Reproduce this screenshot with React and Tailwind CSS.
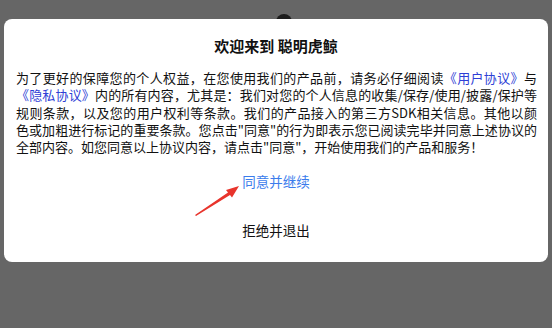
import React from 'react'

function PointerArrow() {
  return (
    <svg className="absolute left-[186px] top-[162px]" width="56" height="40" viewBox="0 0 56 40">
      <polygon points="5,34 38,11.5 36,9 49,5 42,16.5 40,14 6,35" fill="#e8342c" />
    </svg>
  )
}

const lines = [
  <>为了更好的保障您的个人权益，在您使用我们的产品前，请务必仔细阅读<span className="text-[#2f3fd6]">《用户协议》</span>与</>,
  <><span className="text-[#2f3fd6]">《隐私协议》</span>内的所有内容，尤其是：我们对您的个人信息的收集/保存/使用/披露/保护等</>,
  <>规则条款，以及您的用户权利等条款。我们的产品接入的第三方SDK相关信息。其他以颜</>,
  <>色或加粗进行标记的重要条款。您点击"同意"的行为即表示您已阅读完毕并同意上述协议的</>,
]

export default function App() {
  return (
    <div
      className="relative w-[552px] h-[328px] overflow-hidden bg-[#666666] pt-[19px] px-[4px]"
      style={{ fontFamily: '"Noto Sans CJK SC", "Noto Sans", sans-serif' }}
    >
      <div className="absolute left-[276px] top-[14px] size-[16px] rounded-full bg-[#1c1c1c]" />
      <div className="relative h-[243px] rounded-[8px] bg-white flex flex-col">
        <h1 className="pt-[16px] text-center text-[15px] leading-[22px] font-bold text-[#111]">
          欢迎来到 聪明虎鲸
        </h1>
        <div className="mt-[12px] pl-[12px] pr-[11px] text-[13px] leading-[17.3px] text-[#111]">
          {lines.map((l, i) => (
            <div key={i} className="text-justify [text-align-last:justify] whitespace-nowrap">
              {l}
            </div>
          ))}
          <div>全部内容。如您同意以上协议内容，请点击"同意"，开始使用我们的产品和服务！</div>
        </div>
        <button className="mt-[1px] h-[49px] text-[13.5px] text-[#3b7cec]">同意并继续</button>
        <button className="h-[49px] text-[13.5px] text-[#111]">拒绝并退出</button>
        <PointerArrow />
      </div>
    </div>
  )
}
